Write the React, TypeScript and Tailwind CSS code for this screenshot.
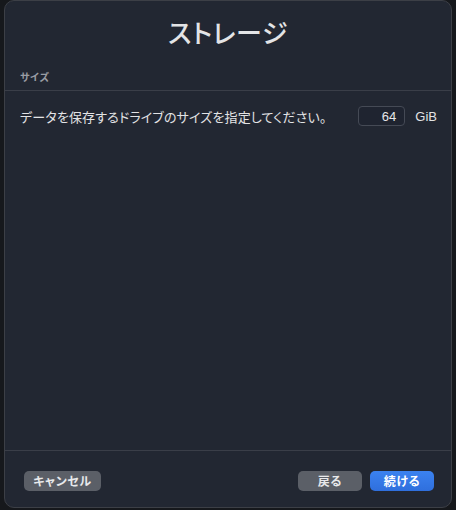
import React from "react";

export default function App() {
  return (
    <div
      className="w-[456px] h-[510px] bg-[#16181c] overflow-hidden"
      style={{ fontFamily: '"Noto Sans CJK JP", "Noto Sans", sans-serif' }}
    >
      <div className="ml-[4px] w-[448px] h-[508px] rounded-[10px] border border-[#3c3f46] bg-[#222732] flex flex-col [font-feature-settings:'palt']">
        <div className="h-[61px] flex items-center justify-center">
          <h1 className="text-[26px] leading-none font-medium text-[#e3e4e6] tracking-[0.6px]">ストレージ</h1>
        </div>
        <div className="h-[28px] px-[15px] flex items-center">
          <span className="text-[10px] font-bold text-[#9a9da4] tracking-[0.6px]">サイズ</span>
        </div>
        <div className="border-t border-[#3a3e48]" />
        <div className="pt-[15px] pl-[15px] pr-[14px] flex items-center">
          <span className="text-[13px] text-[#e2e3e5] leading-none tracking-[0.15px]">
            データを保存するドライブのサイズを指定してください。
          </span>
          <div className="ml-auto w-[47px] h-[20px] rounded-[4px] border border-[#454a55] bg-[#1f2430] flex items-center justify-end pr-[8px]">
            <span className="text-[13px] text-[#e6e7e9] leading-none" style={{ fontFamily: '"Liberation Sans", sans-serif' }}>64</span>
          </div>
          <span className="ml-[10px] text-[13px] text-[#e2e3e5] leading-none" style={{ fontFamily: '"Liberation Sans", sans-serif' }}>GiB</span>
        </div>
        <div className="flex-1" />
        <div className="border-t border-[#3a3e48]" />
        <div className="h-[56px] pt-[20px] pl-[19px] pr-[17px] flex items-start">
          <button className="w-[77px] h-[20px] rounded-[5px] bg-[#5b5f67] text-[12px] font-bold text-[#e8e9eb] leading-none tracking-[0.6px] flex items-center justify-center">
            キャンセル
          </button>
          <div className="flex-1" />
          <button className="w-[64px] h-[20px] rounded-[5px] bg-[#5b5f67] text-[12px] font-bold text-[#e8e9eb] leading-none tracking-[0.6px] flex items-center justify-center">
            戻る
          </button>
          <button className="ml-[8px] w-[64px] h-[20px] rounded-[5px] bg-gradient-to-b from-[#3b82f0] to-[#2f6fdd] text-[12px] font-bold text-white leading-none tracking-[0.6px] flex items-center justify-center">
            続ける
          </button>
        </div>
      </div>
    </div>
  );
}
